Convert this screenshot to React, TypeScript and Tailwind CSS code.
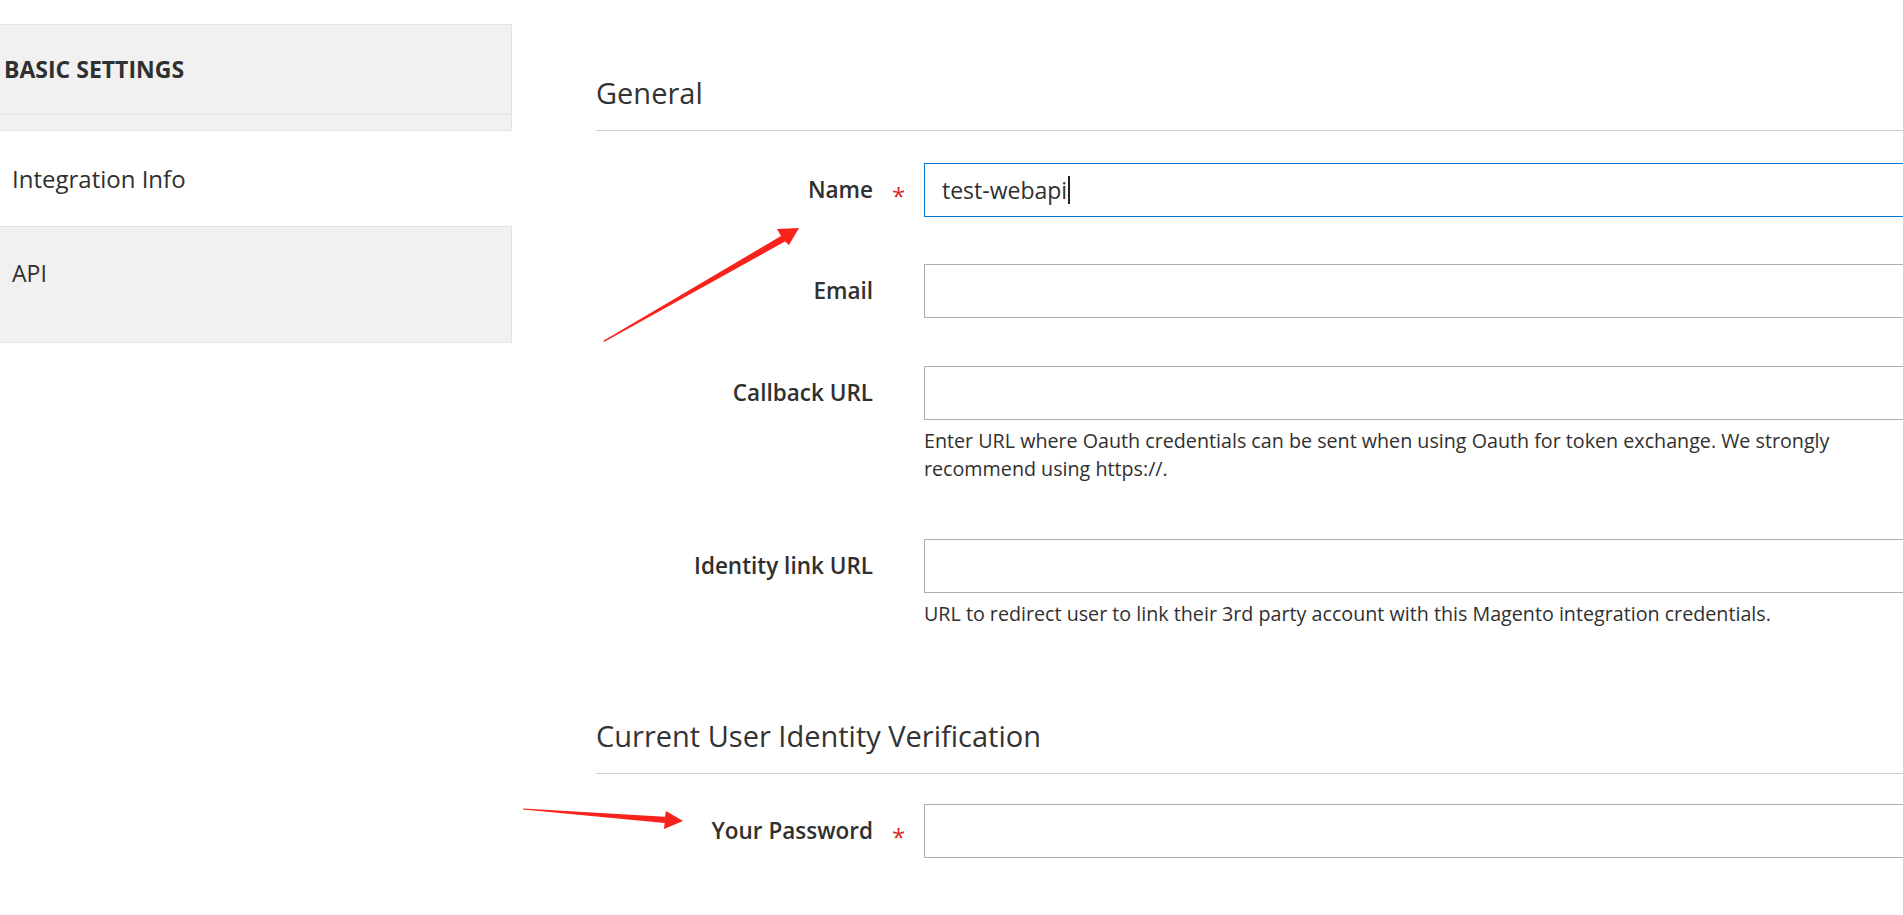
import React from 'react';

// Magento admin "New Integration" form, with two red annotation arrows on top
const LABEL_W = 'w-[277px]';

const Field: React.FC<{
  label: string;
  required?: boolean;
  value?: string;
  focused?: boolean;
  note?: string;
  className?: string;
}> = ({ label, required, value, focused, note, className }) => (
  <div className={className}>
    <div className="flex items-center h-[54px]">
      <label className={`${LABEL_W} shrink-0 text-right text-[22.5px] font-semibold text-[#303030] leading-none`}>
        {label}
      </label>
      <div className="w-[51px] shrink-0 flex justify-center">
        {required && <span className="text-[24px] text-[#e22626] mt-[12px] leading-none">*</span>}
      </div>
      <div
        className={`flex-1 h-[54px] border flex items-center pl-[17px] text-[23px] text-[#303030] ${
          focused ? 'border-[#007bdb]' : 'border-[#adadad]'
        }`}
      >
        {value}
        {focused && <span className="inline-block w-[2px] h-[28px] bg-[#222] ml-[1px]" />}
      </div>
    </div>
    {note && (
      <div className="ml-[328px] mt-[7px] max-w-[960px] text-[19.7px] leading-[28px] text-[#303030]">{note}</div>
    )}
  </div>
);

const Legend: React.FC<{ title: string; className?: string }> = ({ title, className }) => (
  <div className={`border-b border-[#cccccc] pb-[20px] ${className ?? ''}`}>
    <h2 className="text-[29px] leading-[34px] text-[#333] font-normal">{title}</h2>
  </div>
);

export default function App() {
  return (
    <div className="relative w-full h-[915px] overflow-hidden bg-white font-['Open_Sans','Liberation_Sans',sans-serif]">
      <div className="flex">
        {/* Tabs sidebar */}
        <aside className="w-[512px] shrink-0 pt-[24px]">
          <div className="h-[91px] bg-[#f1f1f1] border-t border-b border-r border-[#e3e3e3] flex items-center pl-[4px]">
            <span className="text-[23px] font-bold uppercase text-[#303030]">Basic Settings</span>
          </div>
          <div className="h-[16px] bg-[#f1f1f1] border-b border-r border-[#e3e3e3]" />
          <div className="h-[96px] border-b border-[#e3e3e3] flex items-center pl-[12px]">
            <span className="text-[24px] font-medium text-[#303030]">Integration Info</span>
          </div>
          <div className="h-[116px] bg-[#f1f1f1] border-b border-r border-[#e3e3e3] pl-[12px] pt-[30px]">
            <span className="text-[23px] leading-[32px] text-[#303030]">API</span>
          </div>
        </aside>

        {/* Form */}
        <main className="w-[1400px] shrink-0 ml-[84px] pt-[76px]">
          <Legend title="General" />
          <Field className="mt-[32px]" label="Name" required focused value="test-webapi" />
          <Field className="mt-[47px]" label="Email" />
          <Field
            className="mt-[48px]"
            label="Callback URL"
            note="Enter URL where Oauth credentials can be sent when using Oauth for token exchange. We strongly recommend using https://."
          />
          <Field
            className="mt-[56px]"
            label="Identity link URL"
            note="URL to redirect user to link their 3rd party account with this Magento integration credentials."
          />
          <Legend className="mt-[91px]" title="Current User Identity Verification" />
          <Field className="mt-[30px]" label="Your Password" required />
        </main>
      </div>

      {/* Annotation arrows */}
      <svg className="absolute inset-0 pointer-events-none" width="1903" height="915" viewBox="0 0 1903 915">
        <polygon
          fill="#f7231c"
          points="603,341 781,236 777,229 799,228 789,245 785,241.5 604.5,341.8"
        />
        <polygon
          fill="#f7231c"
          points="523,808.4 665,816.8 666,811 683,821 664,829 664.6,823 523,809.6"
        />
      </svg>
    </div>
  );
}
